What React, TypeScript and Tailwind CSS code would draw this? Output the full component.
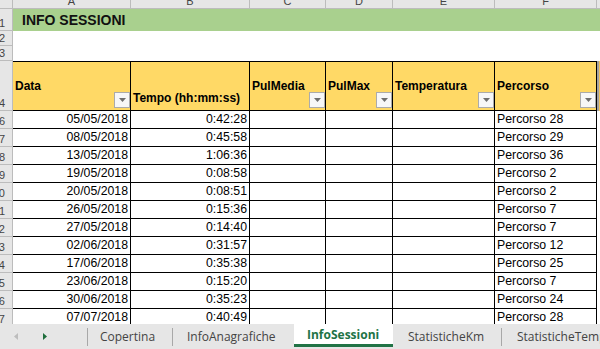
import React from "react";

const cols = [
  { l: "A", w: "w-[118px]" },
  { l: "B", w: "w-[119px]" },
  { l: "C", w: "w-[76px]" },
  { l: "D", w: "w-[67px]" },
  { l: "E", w: "w-[102px]" },
  { l: "F", w: "w-[102px]" },
];

const data: [string, string, string][] = [
  ["05/05/2018", "0:42:28", "Percorso 28"],
  ["08/05/2018", "0:45:58", "Percorso 29"],
  ["13/05/2018", "1:06:36", "Percorso 36"],
  ["19/05/2018", "0:08:58", "Percorso 2"],
  ["20/05/2018", "0:08:51", "Percorso 2"],
  ["26/05/2018", "0:15:36", "Percorso 7"],
  ["27/05/2018", "0:14:40", "Percorso 7"],
  ["02/06/2018", "0:31:57", "Percorso 12"],
  ["17/06/2018", "0:35:38", "Percorso 25"],
  ["23/06/2018", "0:15:20", "Percorso 7"],
  ["30/06/2018", "0:35:23", "Percorso 24"],
  ["07/07/2018", "0:40:49", "Percorso 28"],
];

function RowHead({ n }: { n: number }) {
  return (
    <div className="w-[13px] shrink-0 bg-[#e6e6e6] border-r border-b border-[#bcbcbc] overflow-hidden flex items-end justify-end pr-[7px] text-[11px] leading-[13px] text-[#444]">
      <span className="whitespace-nowrap">{n}</span>
    </div>
  );
}

function FilterBtn() {
  return (
    <div className="absolute right-0 bottom-[2px] w-4 h-4 border border-[#ababab] bg-[#f7f7f7] flex items-center justify-center">
      <svg width="7" height="4" viewBox="0 0 7 4">
        <path d="M0 0 L7 0 L3.5 4 Z" fill="#6f6f6f" />
      </svg>
    </div>
  );
}

const headers = ["Data", "Tempo (hh:mm:ss)", "PulMedia", "PulMax", "Temperatura", "Percorso"];

export default function App() {
  return (
    <div className="w-[600px] h-[349px] overflow-hidden flex flex-col bg-white font-['Liberation_Sans',Arial,sans-serif] text-black">
      <div className="h-[324px] overflow-hidden flex flex-col shrink-0">
        {/* column letters */}
        <div className="h-[9px] flex shrink-0 bg-[#e6e6e6] border-b border-[#bcbcbc]">
          <div className="w-[13px] shrink-0 border-r border-[#bcbcbc]" />
          {cols.map((c) => (
            <div
              key={c.l}
              className={`${c.w} shrink-0 border-r border-[#bcbcbc] overflow-hidden text-center text-[11px] text-[#444]`}
            >
              <span className="block leading-[11px] -mt-[4px]">{c.l}</span>
            </div>
          ))}
          <div className="flex-1" />
        </div>

        {/* row 1 */}
        <div className="h-[22px] flex shrink-0">
          <RowHead n={1} />
          <div className="flex-1 bg-[#a9d08e] flex items-center pl-[9px] text-[14px] font-bold text-[#111]">
            INFO SESSIONI
          </div>
        </div>
        {/* row 2 */}
        <div className="h-[15px] flex shrink-0">
          <RowHead n={2} />
          <div className="flex-1" />
        </div>
        {/* row 3 */}
        <div className="h-[15px] flex shrink-0">
          <RowHead n={3} />
          <div className="flex-1" />
        </div>
        {/* row 4 header */}
        <div className="h-[50px] flex shrink-0">
          <RowHead n={4} />
          {cols.map((c, i) => (
            <div
              key={c.l}
              className={`${c.w} shrink-0 relative bg-[#ffd966] border-t border-b border-r border-black flex pl-[2px] text-[12px] font-bold ${
                i === 1 ? "items-end pb-[3px]" : "items-center"
              }`}
            >
              <span className="whitespace-nowrap">{headers[i]}</span>
              {i !== 1 && <FilterBtn />}
            </div>
          ))}
          <div className="flex-1 bg-[#f3c45c] border-l-2 border-[#a3a3a3]" />
        </div>
        {/* data rows */}
        {data.map((r, idx) => (
          <div key={idx} className="h-[18px] flex shrink-0 text-[12.3px]">
            <RowHead n={idx + 6} />
            <div className="w-[118px] shrink-0 border-r border-b border-black flex items-center justify-end pr-[2px]">
              {r[0]}
            </div>
            <div className="w-[119px] shrink-0 border-r border-b border-black flex items-center justify-end pr-[2px]">
              {r[1]}
            </div>
            <div className="w-[76px] shrink-0 border-r border-b border-black" />
            <div className="w-[67px] shrink-0 border-r border-b border-black" />
            <div className="w-[102px] shrink-0 border-r border-b border-black" />
            <div className="w-[102px] shrink-0 border-r border-b border-black flex items-center pl-[2px] whitespace-nowrap">
              {r[2]}
            </div>
            <div className="flex-1" />
          </div>
        ))}
      </div>

      {/* sheet tabs */}
      <div className="h-[25px] shrink-0 flex items-stretch bg-[#e6e6e6] font-['Open_Sans',sans-serif] text-[12px] text-[#444] whitespace-nowrap">
        <div className="w-[87px] shrink-0 flex items-center pl-[14px] gap-[25px]">
          <svg width="4" height="7" viewBox="0 0 4 7">
            <path d="M4 0 L0 3.5 L4 7 Z" fill="#bdbdbd" />
          </svg>
          <svg width="4" height="7" viewBox="0 0 4 7">
            <path d="M0 0 L4 3.5 L0 7 Z" fill="#1e6e3c" />
          </svg>
        </div>
        <div className="w-px self-center h-[18px] bg-[#a8a8a8]" />
        <div className="w-[84px] shrink-0 flex items-center pl-[12px]">Copertina</div>
        <div className="w-px self-center h-[18px] bg-[#a8a8a8]" />
        <div className="w-[121px] shrink-0 flex items-center pl-[14px]">InfoAnagrafiche</div>
        <div className="w-[99px] shrink-0 h-[23px] bg-white border-b-[3px] border-[#217346] flex items-center pl-[13px] pt-[1px] font-bold text-[#217346]">
          InfoSessioni
        </div>
        <div className="w-[108px] shrink-0 flex items-center pl-[15px]">StatisticheKm</div>
        <div className="w-px self-center h-[18px] bg-[#a8a8a8]" />
        <div className="flex-1 flex items-center pl-[15px] overflow-hidden">StatisticheTempi</div>
      </div>
    </div>
  );
}
